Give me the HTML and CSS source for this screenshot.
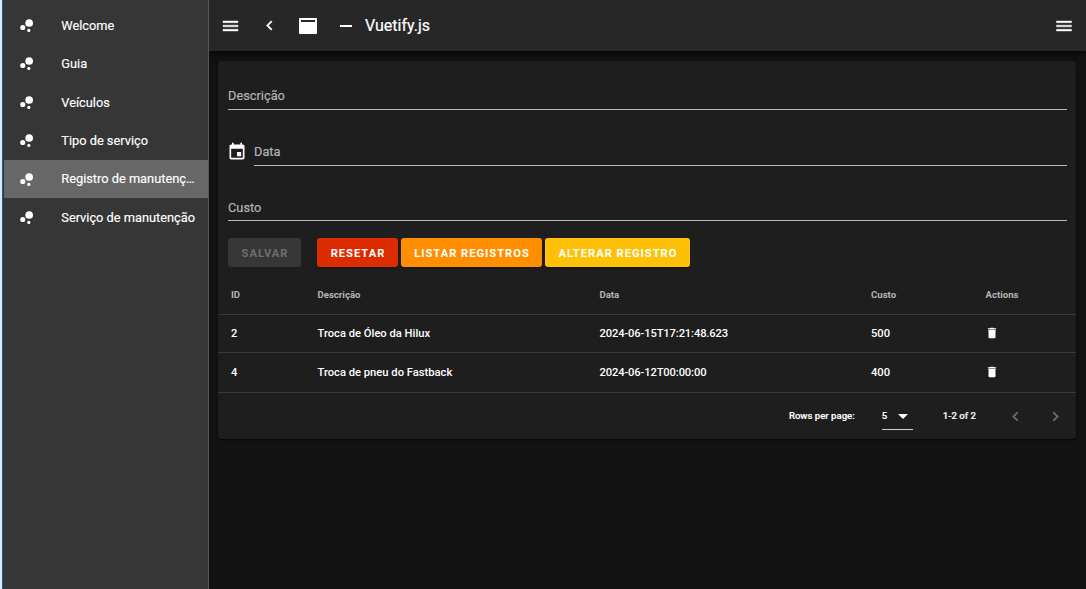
FILE: index.html
```html
<!DOCTYPE html>
<html lang="pt-BR">
<head>
<meta charset="utf-8">
<title>Vuetify.js</title>
<link rel="stylesheet" href="styles.css">
</head>
<body>
<svg class="defs" width="0" height="0">
  <symbol id="bubble" viewBox="0 0 24 24"><circle cx="7.2" cy="14.4" r="3.2"/><circle cx="14.8" cy="18" r="2"/><circle cx="15.2" cy="8.8" r="4.8"/></symbol>
  <symbol id="menu" viewBox="0 0 24 24"><path d="M3,6H21V8H3V6M3,11H21V13H3V11M3,16H21V18H3V16Z"/></symbol>
  <symbol id="left" viewBox="0 0 24 24"><path d="M15.41,16.58L10.83,12L15.41,7.41L14,6L8,12L14,18L15.41,16.58Z"/></symbol>
  <symbol id="right" viewBox="0 0 24 24"><path d="M8.59,16.58L13.17,12L8.59,7.41L10,6L16,12L10,18L8.59,16.58Z"/></symbol>
  <symbol id="trash" viewBox="0 0 24 24"><path d="M19,4H15.5L14.5,3H9.5L8.5,4H5V6H19M6,19A2,2 0 0,0 8,21H16A2,2 0 0,0 18,19V7H6V19Z"/></symbol>
</svg>
<div class="app">
  <nav class="drawer">
    <a class="item"><svg class="icon"><use href="#bubble"/></svg><span class="label">Welcome</span></a>
    <a class="item"><svg class="icon"><use href="#bubble"/></svg><span class="label">Guia</span></a>
    <a class="item"><svg class="icon"><use href="#bubble"/></svg><span class="label">Veículos</span></a>
    <a class="item"><svg class="icon"><use href="#bubble"/></svg><span class="label">Tipo de serviço</span></a>
    <a class="item active"><svg class="icon"><use href="#bubble"/></svg><span class="label">Registro de manutenç…</span></a>
    <a class="item"><svg class="icon"><use href="#bubble"/></svg><span class="label">Serviço de manutenção</span></a>
  </nav>
  <div class="main">
    <header class="toolbar">
      <svg class="bar-icon menu-left"><use href="#menu"/></svg>
      <svg class="bar-icon back"><use href="#left"/></svg>
      <svg class="window" viewBox="0 0 18 16"><path fill-rule="evenodd" d="M1 0H17Q18 0 18 1V15Q18 16 17 16H1Q0 16 0 15V1Q0 0 1 0ZM2 2V4H16V2Z"/></svg>
      <svg class="minus" viewBox="0 0 12 2"><path d="M0 0H12V2H0Z"/></svg>
      <h1 class="title">Vuetify.js</h1>
      <svg class="bar-icon menu-right"><use href="#menu"/></svg>
    </header>
    <section class="card">
      <div class="form">
        <div class="field"><div class="control">Descrição</div></div>
        <div class="field">
          <svg class="calendar" viewBox="0 0 24 24"><path d="M19,19H5V8H19M16,1V3H8V1H6V3H5C3.89,3 3,3.89 3,5V19A2,2 0 0,0 5,21H19A2,2 0 0,0 21,19V5C21,3.89 20.1,3 19,3H18V1M17,12H12V17H17V12Z"/></svg>
          <div class="control">Data</div>
        </div>
        <div class="field last"><div class="control">Custo</div></div>
        <div class="actions">
          <button class="btn save" disabled>SALVAR</button>
          <button class="btn reset">RESETAR</button>
          <button class="btn list">LISTAR REGISTROS</button>
          <button class="btn edit">ALTERAR REGISTRO</button>
        </div>
      </div>
      <div class="row head"><span>ID</span><span>Descrição</span><span>Data</span><span>Custo</span><span>Actions</span></div>
      <div class="row"><span>2</span><span>Troca de Óleo da Hilux</span><span class="date">2024-06-15T17:21:48.623</span><span>500</span><span><svg class="trash"><use href="#trash"/></svg></span></div>
      <div class="row second"><span>4</span><span>Troca de pneu do Fastback</span><span class="date">2024-06-12T00:00:00</span><span>400</span><span><svg class="trash"><use href="#trash"/></svg></span></div>
      <footer class="pager">
        <span class="per-page">Rows per page:</span>
        <div class="select"><span>5</span><svg class="caret" viewBox="0 0 10 5"><path d="M0 0H10L5 5Z"/></svg></div>
        <span class="range">1-2 of 2</span>
        <svg class="page-icon prev"><use href="#left"/></svg>
        <svg class="page-icon"><use href="#right"/></svg>
      </footer>
    </section>
  </div>
</div>
</body>
</html>
```

FILE: styles.css
```css
* { box-sizing: border-box; }
body { margin: 0; background: #121212; color: #fff; font-family: Roboto, "Liberation Sans", sans-serif; overflow: hidden; }
svg { display: block; flex: none; fill: currentColor; }
.defs { position: absolute; }
.app { display: flex; height: 589px; border-left: 2px solid #e6e6e6; }
.drawer { position: relative; z-index: 1; width: 207px; flex: none; padding-top: 6.4px; background: #363636; border-left: 1px solid #0065b0; border-right: 1px solid #565656; }
.item { display: flex; align-items: center; height: 38.4px; margin-left: 1px; padding: 0 9px 0 12.5px; font-size: 12.8px; -webkit-text-stroke: .15px; }
.active { background: #676767; }
.active .label { padding-bottom: 1px; }
.icon { width: 19.2px; height: 19.2px; margin-right: 25.6px; }
.label { min-width: 0; white-space: nowrap; }
.main { flex: 1; min-width: 0; }
.toolbar { display: flex; align-items: center; height: 51px; padding: 0 12px 0 11px; background: #272727; box-shadow: 0 2px 3px rgba(0,0,0,.4), 0 3px 8px rgba(0,0,0,.25); }
.bar-icon { width: 20px; height: 20px; stroke: currentColor; stroke-width: .5px; }
.menu-left { width: 21px; }
.back { width: 19px; height: 19px; margin-left: 19px; }
.window { width: 18px; height: 16px; margin-left: 20px; }
.minus { width: 12px; height: 2px; margin-left: 23px; }
.title { margin: 0 0 0 13px; font-size: 16px; font-weight: 400; -webkit-text-stroke: .2px; }
.menu-right { margin-left: auto; }
.card { width: 858px; height: 378px; margin: 10px 0 0 9px; padding-top: 20px; background: #1e1e1e; border-radius: 4px; box-shadow: 0 2px 1px -1px rgba(0,0,0,.2), 0 1px 2px rgba(0,0,0,.5); }
.form { padding: 0 9px 0 10px; }
.field { display: flex; height: 29px; margin-bottom: 27px; }
.control { flex: 1; height: 29px; padding-top: 7px; border-bottom: 1px solid #b8b8b8; color: #b4b4b4; font-size: 12.8px; line-height: 15px; -webkit-text-stroke: .2px; }
.last { height: 28px; margin-bottom: 17px; }
.last .control { height: 28px; }
.calendar { width: 20px; height: 20px; margin: 5px 7px 0 -1px; }
.actions { display: flex; gap: 3px; }
.btn { height: 29px; padding: 2px 0 0 1px; border: 0; border-radius: 3px; color: #fff; font: 700 11.2px Roboto, sans-serif; letter-spacing: .97px; box-shadow: 0 2px 2px rgba(0,0,0,.25); }
.save { width: 73px; margin-right: 13px; background: #373737; color: #6e6e6e; box-shadow: none; }
.reset { width: 81px; background: #dd2c00; }
.list { width: 141px; background: #ff8f00; }
.edit { width: 145px; background: #ffc107; }
.row { display: grid; grid-template-columns: 86.5px 282px 271.5px 114.5px 1fr; align-items: center; height: 38px; padding-left: 13px; border-bottom: 1px solid #393939; font-size: 11.2px; font-weight: 500; }
.head { height: 48px; padding-top: 8px; color: #b4b4b4; font-size: 9.6px; font-weight: 700; }
.second { height: 40px; }
.date { letter-spacing: -.13px; }
.trash { width: 14px; height: 14px; margin: -1px 0 0 -1px; }
.pager { display: flex; align-items: center; height: 46px; padding-right: 11px; justify-content: flex-end; font-size: 9.6px; font-weight: 500; -webkit-text-stroke: .15px; }
.per-page { margin-right: 27px; padding-bottom: 1px; }
.select { display: flex; align-items: center; width: 31px; height: 28px; border-bottom: 1px solid #d0d0d0; }
.caret { width: 10px; height: 5px; margin: 1px 0 0 11px; }
.range { margin-left: 30px; padding-bottom: 1px; }
.page-icon { width: 19px; height: 19px; color: #6c6c6c; stroke: currentColor; stroke-width: .5px; }
.prev { margin: 0 21px 0 30px; }
```
